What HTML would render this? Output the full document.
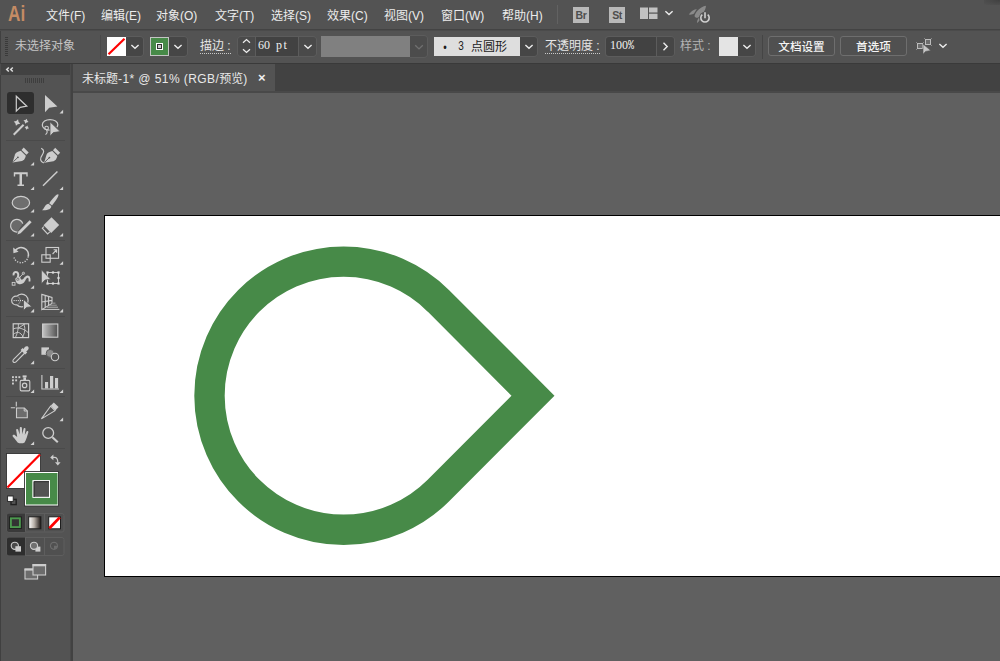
<!DOCTYPE html>
<html lang="zh-CN">
<head>
<meta charset="utf-8">
<title>未标题-1* @ 51% (RGB/预览)</title>
<style>
*{box-sizing:border-box;margin:0;padding:0}
html,body{width:1000px;height:661px;overflow:hidden;background:#606060}
body{position:relative;font-family:"Liberation Sans","Noto Sans CJK SC",sans-serif;font-size:12px;color:#e4e4e4}
.abs{position:absolute}
#menubar{left:0;top:0;width:1000px;height:29px;background:#535353}
#menuline{left:0;top:29px;width:1000px;height:2px;background:linear-gradient(#434343,#434343 50%,#4b4b4b 50%)}
#ctrlbar{left:0;top:31px;width:1000px;height:32px;background:#535353}
#ctrlline{left:0;top:63px;width:1000px;height:1px;background:#3a3a3a}
#tabbar{left:72px;top:64px;width:928px;height:27px;background:#424242}
#tabline{left:73px;top:91px;width:927px;height:2px;background:#494949}
#tab{left:73px;top:64px;width:202px;height:27px;background:#535353}
#panel{left:0;top:64px;width:70px;height:597px;background:#535353}
#panelhead{left:1px;top:64px;width:69px;height:11px;background:#424242}
#paneledge{left:70px;top:64px;width:3px;height:597px;background:linear-gradient(to right,#4a4a4a 0,#4a4a4a 1px,#424242 1px)}
#canvas{left:73px;top:93px;width:927px;height:568px;background:#606060}
#artboard{left:104px;top:215px;width:900px;height:362px;background:#fff;border:1px solid #000}
.mi{top:7px;height:18px;line-height:18px;white-space:nowrap;font-size:12px;color:#ececec}
.ct{white-space:nowrap;font-size:12px;line-height:16px}

.box{position:absolute;top:37px;height:19px}
.dd{position:absolute;top:37px;height:19px;background:#464646;border-radius:0 3px 3px 0;box-shadow:1px 0 0 0 #5c5c5c,0 1px 0 0 #5c5c5c,0 -1px 0 0 #5c5c5c}
.dd svg,.chev{position:absolute}
.inp{position:absolute;top:37px;height:19px;background:#424242;color:#f0f0f0;white-space:nowrap;box-shadow:0 0 0 1px #5c5c5c}
.inp span,.ss{display:inline-block;font-family:"Liberation Mono","Noto Sans CJK SC",monospace;font-size:12px;line-height:16px;transform-origin:0 0;transform:scaleX(0.833);white-space:pre}
.lbl{position:absolute;top:39px;font-size:12px;line-height:15px;white-space:nowrap;color:#e6e6e6;border-bottom:1px dotted #c8c8c8;height:15px}
.btn{position:absolute;top:36px;height:20px;border:1px solid #6e6e6e;border-radius:3px;background:#505050;color:#f4f4f4;font-size:11.6px;line-height:20px;text-align:center;font-weight:500;white-space:nowrap}
.sf{position:absolute;font-weight:normal;font-family:"Liberation Serif",serif;font-size:12px;line-height:16px;white-space:pre}
</style>
</head>
<body>
<div id="menubar" class="abs"></div>
<div id="menuline" class="abs"></div>
<div id="ctrlbar" class="abs"></div>
<div id="ctrlline" class="abs"></div>
<div id="canvas" class="abs"></div>
<div id="tabbar" class="abs"></div>
<div id="tab" class="abs"></div>
<div id="tabline" class="abs"></div>
<div id="panel" class="abs"></div>
<div id="panelhead" class="abs"></div>
<div id="paneledge" class="abs"></div>
<div id="artboard" class="abs"></div>

<!-- artwork -->
<svg class="abs" style="left:0;top:0" width="1000" height="661" viewBox="0 0 1000 661">
  <path d="M438.42 300.88 A134.1 134.1 0 1 0 438.42 490.52 L533 395.7 Z" fill="none" stroke="#478a48" stroke-width="30.4" stroke-linejoin="miter" stroke-miterlimit="10"/>
</svg>

<!-- PANEL-START -->
<svg class="abs" style="left:0;top:0" width="72" height="661" viewBox="0 0 72 661">
<path d="M8.8 67.5 L6.7 69.5 L8.8 71.5 M12.8 67.5 L10.7 69.5 L12.8 71.5" fill="none" stroke="#dcdcdc" stroke-width="1.5"/>
<g stroke="#3e3e3e" stroke-width="1"><line x1="25.5" y1="78" x2="25.5" y2="83"/><line x1="27.5" y1="78" x2="27.5" y2="83"/><line x1="29.5" y1="78" x2="29.5" y2="83"/><line x1="31.5" y1="78" x2="31.5" y2="83"/><line x1="33.5" y1="78" x2="33.5" y2="83"/><line x1="35.5" y1="78" x2="35.5" y2="83"/><line x1="37.5" y1="78" x2="37.5" y2="83"/><line x1="39.5" y1="78" x2="39.5" y2="83"/><line x1="41.5" y1="78" x2="41.5" y2="83"/><line x1="43.5" y1="78" x2="43.5" y2="83"/></g>
<line x1="6" y1="140.5" x2="65" y2="140.5" stroke="#4a4a4a" stroke-width="1"/>
<line x1="6" y1="240.5" x2="65" y2="240.5" stroke="#4a4a4a" stroke-width="1"/>
<line x1="6" y1="316.5" x2="65" y2="316.5" stroke="#4a4a4a" stroke-width="1"/>
<line x1="6" y1="368.5" x2="65" y2="368.5" stroke="#4a4a4a" stroke-width="1"/>
<line x1="6" y1="396.5" x2="65" y2="396.5" stroke="#4a4a4a" stroke-width="1"/>
<line x1="6" y1="448.5" x2="65" y2="448.5" stroke="#4a4a4a" stroke-width="1"/>
<rect x="7" y="92" width="27" height="22" rx="3" fill="#2e2e2e"/>
<path d="M16.3 96.2 L16.3 111.2 L20.2 107.4 L26.8 106.2 Z" fill="none" stroke="#cdcdcd" stroke-width="1.2"/>
<path d="M45 95 L45 112.2 L49.2 107.8 L57.4 106.4 Z" fill="#cdcdcd"/>
<path d="M59.5 113.39999999999999 L63.1 113.39999999999999 L63.1 109.8 Z" fill="#d2d2d2"/>
<line x1="13.7" y1="134.8" x2="23.6" y2="124.8" stroke="#cdcdcd" stroke-width="2"/>
<path transform="rotate(18 17 122.6)" d="M17 119.19999999999999 L18.224 121.37599999999999 L20.4 122.6 L18.224 123.824 L17 126.0 L15.776 123.824 L13.6 122.6 L15.776 121.37599999999999 Z" fill="#cdcdcd"/>
<path transform="rotate(18 26 121.2)" d="M26 118.5 L26.972 120.22800000000001 L28.7 121.2 L26.972 122.172 L26 123.9 L25.028 122.172 L23.3 121.2 L25.028 120.22800000000001 Z" fill="#cdcdcd"/>
<path transform="rotate(18 26.8 127.6)" d="M26.8 125.3 L27.628 126.77199999999999 L29.1 127.6 L27.628 128.428 L26.8 129.9 L25.972 128.428 L24.5 127.6 L25.972 126.77199999999999 Z" fill="#cdcdcd"/>
<path d="M50 130.2 C45.5 130.2 42.3 127.8 42.3 125 C42.3 121.8 45.8 119.6 50 119.6 C54.4 119.6 57.8 121.8 57.8 124.6 C57.8 125.6 57.5 126.4 57 127" fill="none" stroke="#cdcdcd" stroke-width="1.2"/>
<circle cx="46.6" cy="128" r="1.8" fill="none" stroke="#cdcdcd" stroke-width="1.1"/><path d="M46.6 129.8 C47.4 131.6 47.2 133.6 45.4 134.6" fill="none" stroke="#cdcdcd" stroke-width="1.1"/>
<path d="M50 121.8 L50 136.2 L53.4 132.6 L60.2 131.6 Z" fill="#cdcdcd" stroke="#535353" stroke-width="0.8"/>
<g transform="translate(0 0)"><path d="M12.6 162.5 L15 154.4 C15.6 152.8 17.6 151.4 20.8 150.7 L25.8 155.7 C25.2 158.6 23.8 160.4 22 160.9 Z" fill="#cdcdcd"/><path d="M21.5 149.9 L23.7 147.4 L28.7 152.4 L26.4 154.8 Z" fill="#cdcdcd"/><line x1="13.3" y1="161.8" x2="17.6" y2="157.6" stroke="#535353" stroke-width="0.9"/><circle cx="17.9" cy="157.3" r="0.9" fill="#535353"/></g>
<path d="M30.5 165.6 L34.1 165.6 L34.1 162 Z" fill="#d2d2d2"/>
<g transform="translate(31.5 0.3)"><path d="M12.6 162.5 L15 154.4 C15.6 152.8 17.6 151.4 20.8 150.7 L25.8 155.7 C25.2 158.6 23.8 160.4 22 160.9 Z" fill="#cdcdcd"/><path d="M21.5 149.9 L23.7 147.4 L28.7 152.4 L26.4 154.8 Z" fill="#cdcdcd"/><line x1="13.3" y1="161.8" x2="17.6" y2="157.6" stroke="#535353" stroke-width="0.9"/><circle cx="17.9" cy="157.3" r="0.9" fill="#535353"/></g>
<path d="M41.2 148.2 C44.6 149.8 44 152.6 42 155.4 C39.8 158.4 40 161.6 43.8 162.9" fill="none" stroke="#cdcdcd" stroke-width="1.2"/>
<path d="M13.8 172.3 H27.7 V176.6 H26.3 V174.3 H22 V184.4 H24 V185.9 H17.5 V184.4 H19.5 V174.3 H15.2 V176.6 H13.8 Z" fill="#cdcdcd"/>
<path d="M30.5 190.1 L34.1 190.1 L34.1 186.5 Z" fill="#d2d2d2"/>
<line x1="43" y1="185.8" x2="57.4" y2="171.5" stroke="#cdcdcd" stroke-width="1.5"/>
<path d="M59.5 190.1 L63.1 190.1 L63.1 186.5 Z" fill="#d2d2d2"/>
<ellipse cx="20.9" cy="202.7" rx="8.7" ry="6.4" fill="#6e6e6e" stroke="#cdcdcd" stroke-width="1.2"/>
<path d="M30.5 212.6 L34.1 212.6 L34.1 209 Z" fill="#d2d2d2"/>
<path d="M58.3 194.2 C59 195.6 57.4 198.6 52 205.4 L49.2 203.2 C54 196.4 56.8 193.8 58.3 194.2 Z" fill="#cdcdcd"/>
<path d="M48.4 203.8 L51.2 206 C51.6 209 47.6 210.6 42 210.2 C44.6 208.8 44 205 48.4 203.8 Z" fill="#cdcdcd"/>
<path d="M59.5 212.6 L63.1 212.6 L63.1 209 Z" fill="#d2d2d2"/>
<path d="M17.5 232 A6.3 6.3 0 1 1 22.8 223.6" fill="#6a6a6a" stroke="#cdcdcd" stroke-width="1.2"/>
<path d="M29.6 220.3 L31.6 222.3 L20.6 233.3 L17.4 234.6 L18.6 231.3 Z" fill="#cdcdcd"/>
<path d="M30.5 236.6 L34.1 236.6 L34.1 233 Z" fill="#d2d2d2"/>
<path d="M51.5 217.3 L59.2 225 L51.2 233 L43.5 225.3 Z" fill="#cdcdcd"/>
<path d="M43.9 226.6 L42.3 228.2 L47.6 233.9 L49.8 231.9" fill="none" stroke="#cdcdcd" stroke-width="1.1"/>
<path d="M59.5 236.6 L63.1 236.6 L63.1 233 Z" fill="#d2d2d2"/>
<path d="M15.2 250.5 A7.3 7.3 0 0 1 28.2 256.5" fill="none" stroke="#cdcdcd" stroke-width="1.6"/>
<path d="M28.2 256.5 A7.3 7.3 0 0 1 14 257.5" fill="none" stroke="#cdcdcd" stroke-width="1.4" stroke-dasharray="1.2 1.4"/>
<path d="M13.2 247.6 L13.4 253.2 L18.6 251.8 Z" fill="#cdcdcd"/>
<path d="M30.5 264.8 L34.1 264.8 L34.1 261.2 Z" fill="#d2d2d2"/>
<rect x="46" y="247.5" width="12.6" height="10.8" fill="none" stroke="#cdcdcd" stroke-width="1.1"/>
<rect x="41.8" y="254.8" width="8.4" height="7.4" fill="none" stroke="#cdcdcd" stroke-width="1.1"/>
<path d="M52.6 254 L56 250.4 M53.6 249.8 H56.6 V252.8" fill="none" stroke="#cdcdcd" stroke-width="1.1"/>
<path d="M59.5 264.8 L63.1 264.8 L63.1 261.2 Z" fill="#d2d2d2"/>
<path d="M13.6 275.4 C13 272.6 15.4 271.2 17.2 272.4 C19.2 273.8 18.2 276.4 17.4 278.4" fill="none" stroke="#cdcdcd" stroke-width="2"/>
<path d="M15.4 278.2 C15 283.2 19 285.4 22.6 283.6 C25.4 282.2 25.6 278.6 27.4 277.8 C28.6 277.4 28.8 279.4 28.6 281.4 L30.4 281.4 C30.8 278.4 30.2 275.4 27.6 275.4 C24.6 275.6 24.2 278.8 22.2 279.6 C20.6 280 20.4 278 20 276.6 Z" fill="#cdcdcd"/>
<path d="M18.6 278.6 L23 273.8" stroke="#cdcdcd" stroke-width="0.9"/><circle cx="23.4" cy="273.3" r="1.2" fill="#8a8a8a" stroke="#cdcdcd" stroke-width="0.7"/><circle cx="17.9" cy="279.3" r="1.7" fill="#444" stroke="#cdcdcd" stroke-width="0.8"/><circle cx="17.9" cy="279.3" r="0.7" fill="#eee"/>
<rect x="12.2" y="282.4" width="2.8" height="2.8" fill="#535353" stroke="#cdcdcd" stroke-width="0.9"/>
<path d="M30.5 288.8 L34.1 288.8 L34.1 285.2 Z" fill="#d2d2d2"/>
<rect x="47.5" y="272.5" width="11" height="11" fill="none" stroke="#cdcdcd" stroke-width="1"/>
<rect x="46.4" y="271.4" width="2.2" height="2.2" fill="#dadada"/>
<rect x="51.9" y="271.4" width="2.2" height="2.2" fill="#dadada"/>
<rect x="57.4" y="271.4" width="2.2" height="2.2" fill="#dadada"/>
<rect x="57.4" y="276.9" width="2.2" height="2.2" fill="#dadada"/>
<rect x="57.4" y="282.4" width="2.2" height="2.2" fill="#dadada"/>
<rect x="51.9" y="282.4" width="2.2" height="2.2" fill="#dadada"/>
<rect x="46.4" y="282.4" width="2.2" height="2.2" fill="#dadada"/>
<path d="M41.4 269.8 L41.4 283.8 L45 280 L50.6 279.2 Z" fill="#cdcdcd" stroke="#535353" stroke-width="0.7"/>
<path d="M16.92 296.25 A4.35 4.35 0 1 0 16.92 304.75 A6.4 6.4 0 1 0 16.92 296.25 Z" fill="none" stroke="#cdcdcd" stroke-width="1.2"/>
<path d="M16.92 296.25 A4.35 4.35 0 0 1 16.92 304.75" fill="none" stroke="#8c8c8c" stroke-width="1"/>
<line x1="13.6" y1="300.6" x2="23.6" y2="300.6" stroke="#e0e0e0" stroke-width="1" stroke-dasharray="1.1 1"/>
<path d="M23.5 299.4 L23.5 310.6 L26.6 307.4 L32 306.7 Z" fill="#cdcdcd" stroke="#535353" stroke-width="0.8"/>
<path d="M30.5 312.40000000000003 L34.1 312.40000000000003 L34.1 308.8 Z" fill="#d2d2d2"/>
<path d="M41.8 294.4 L52 297.4 V303.4 L41.8 309.6 Z M41.8 302 L52 300.4 M45.2 295.4 V307.6 M48.6 296.4 V305.4" fill="none" stroke="#cdcdcd" stroke-width="1.1"/>
<path d="M52 303.2 H55.4" stroke="#8c8c8c" stroke-width="1.4"/><path d="M50 305.2 H56.8" stroke="#a0a0a0" stroke-width="1"/><path d="M47 307.2 H58" stroke="#b4b4b4" stroke-width="1"/><path d="M42 309.4 H59.4" stroke="#cdcdcd" stroke-width="1"/>
<path d="M59.5 312.40000000000003 L63.1 312.40000000000003 L63.1 308.8 Z" fill="#d2d2d2"/>
<rect x="13.2" y="323.8" width="15.4" height="13.8" fill="none" stroke="#cdcdcd" stroke-width="1.2"/>
<path d="M13.2 329 C18 326.6 24 328.6 28.6 333 M13.2 334.4 C17 331.6 20 331 23.6 337.6 M18.4 323.8 C18.6 328 17.6 333 15.4 337.6 M23.6 323.8 C25.6 328 25.2 333 22 337.6 M18.6 328 L24.8 324" fill="none" stroke="#cdcdcd" stroke-width="0.9"/>
<defs><linearGradient id="gr1" x1="0" x2="1" y1="0" y2="0"><stop offset="0" stop-color="#c4c4c4"/><stop offset="1" stop-color="#505050"/></linearGradient><linearGradient id="gr2" x1="0" x2="1" y1="0" y2="0"><stop offset="0" stop-color="#ffffff"/><stop offset="0.45" stop-color="#b8b0a8"/><stop offset="1" stop-color="#1a1412"/></linearGradient></defs>
<rect x="42.6" y="324" width="15.2" height="13.2" fill="url(#gr1)" stroke="#cdcdcd" stroke-width="1.1"/>
<path d="M22.4 350.6 L13.6 359.4 C12.6 360.4 12.8 361.6 13.4 362 C14 362.6 15.2 362.6 16 361.8 L24.8 353" fill="none" stroke="#cdcdcd" stroke-width="1.1"/>
<path d="M20.6 350 L22.6 348 L23.6 349 C24.4 346.6 26.4 345.4 28 346.6 C29.4 348 28.6 350 26.2 351.4 L27.2 352.4 L25.2 354.4 Z" fill="#cdcdcd"/>
<path d="M30.5 364.20000000000005 L34.1 364.20000000000005 L34.1 360.6 Z" fill="#d2d2d2"/>
<rect x="41.4" y="347.4" width="7.6" height="7.4" fill="#cdcdcd"/>
<circle cx="50.2" cy="353.4" r="4" fill="#8a8a8a" stroke="#535353" stroke-width="0.9"/>
<circle cx="55" cy="357" r="3.7" fill="#535353" stroke="#cdcdcd" stroke-width="1.1"/>
<rect x="12" y="376.2" width="1.9" height="1.9" fill="#cdcdcd"/>
<rect x="15.2" y="376.2" width="1.9" height="1.9" fill="#cdcdcd"/>
<rect x="18.4" y="376.2" width="1.9" height="1.9" fill="#cdcdcd"/>
<rect x="12" y="379.4" width="1.9" height="1.9" fill="#cdcdcd"/>
<rect x="15.2" y="379.4" width="1.9" height="1.9" fill="#cdcdcd"/>
<rect x="12" y="382.6" width="1.9" height="1.9" fill="#cdcdcd"/>
<path d="M21.4 380.4 H28.6 C29.4 380.4 29.8 381 29.8 381.8 V389.6 C29.8 390.4 29.4 390.9 28.6 390.9 H21.4 C20.6 390.9 20.2 390.4 20.2 389.6 V381.8 C20.2 381 20.6 380.4 21.4 380.4 Z" fill="none" stroke="#cdcdcd" stroke-width="1.1"/>
<rect x="22.6" y="375.4" width="4" height="2" fill="#cdcdcd"/><rect x="23.4" y="377.4" width="2.6" height="3" fill="#cdcdcd"/>
<circle cx="24.6" cy="385.4" r="2.2" fill="none" stroke="#cdcdcd" stroke-width="1.2"/>
<path d="M30.5 393.0 L34.1 393.0 L34.1 389.4 Z" fill="#d2d2d2"/>
<path d="M41.9 375 V389 H59" fill="none" stroke="#cdcdcd" stroke-width="1.1"/>
<rect x="45" y="382" width="3.1" height="6.4" fill="#cdcdcd"/><rect x="50" y="376" width="3.2" height="12.4" fill="#cdcdcd"/><rect x="55" y="378" width="3.1" height="10.4" fill="#cdcdcd"/>
<path d="M59.5 393.0 L63.1 393.0 L63.1 389.4 Z" fill="#d2d2d2"/>
<path d="M16.3 401.8 V406.4 M10.8 407.8 H15.2" stroke="#cdcdcd" stroke-width="1.1"/>
<path d="M16.5 408 H24.4 L27.3 410.9 V417.8 H16.5 Z" fill="#6c6c6c" stroke="#cdcdcd" stroke-width="1.1"/><path d="M24.2 408 V411 H27.3" fill="none" stroke="#cdcdcd" stroke-width="1"/>
<path d="M41.4 418.9 L50.6 406 L55 410.6 Z" fill="none" stroke="#cdcdcd" stroke-width="1.1"/>
<path d="M50.8 405.6 L53.8 402.6 L58.6 407 L55.4 410.6 Z" fill="#cdcdcd"/>
<path d="M59.5 421.20000000000005 L63.1 421.20000000000005 L63.1 417.6 Z" fill="#d2d2d2"/>
<path d="M17.6 442.4 C15.4 439.4 13.8 437.6 12.6 436.2 C12.4 434.8 14 434.4 15 435.2 L17.2 437 L16.2 430.2 C16 428.8 17.8 428.4 18.2 429.8 L19.6 434.4 L19.8 428 C19.8 426.6 21.8 426.6 21.9 428 L22.3 434.2 L23.6 428.8 C23.9 427.6 25.7 427.9 25.5 429.3 L24.8 435 L26.6 431.6 C27.2 430.6 28.8 431.2 28.3 432.6 C27.2 435.8 26.6 439.6 24.6 442.4 C22.8 443.6 19.4 443.6 17.6 442.4 Z" fill="#cdcdcd"/>
<path d="M30.5 445.0 L34.1 445.0 L34.1 441.4 Z" fill="#d2d2d2"/>
<circle cx="48.2" cy="433" r="5.4" fill="none" stroke="#cdcdcd" stroke-width="1.3"/><line x1="52.4" y1="437.3" x2="57.8" y2="442.3" stroke="#cdcdcd" stroke-width="2.1"/>
<rect x="6.5" y="453.5" width="34" height="35" fill="#fff" stroke="#333" stroke-width="0.9"/>
<line x1="7.4" y1="487.6" x2="40" y2="454.4" stroke="#f00" stroke-width="2.2"/>
<path d="M51.6 457.4 H54.4 C57 457.4 57.8 459 57.8 462.4" fill="none" stroke="#cdcdcd" stroke-width="1.2"/><path d="M50.2 457.4 L53.4 454.6 V460.2 Z M57.8 465.6 L55 462.2 H60.6 Z" fill="#cdcdcd"/>
<rect x="24.5" y="471.5" width="34" height="34.5" fill="#fff" stroke="#333" stroke-width="0.9"/>
<path d="M26 473 H57.5 V504.6 H26 Z M32.6 480.2 V497.8 H50 V480.2 Z" fill="#478a48" fill-rule="evenodd"/>
<rect x="33.1" y="480.7" width="16.4" height="16.6" fill="#535353" stroke="#fff" stroke-width="1"/><path d="M34.1 497 V481.7 H49" fill="none" stroke="#2c2c2c" stroke-width="1"/>
<rect x="11" y="499.4" width="5.2" height="5.2" fill="#535353" stroke="#222" stroke-width="1.4"/><rect x="7.6" y="496" width="5.6" height="5.4" fill="#fff" stroke="#222" stroke-width="0.9"/>
<rect x="7" y="513.5" width="57" height="18.5" rx="2" fill="#505050" stroke="#5e5e5e" stroke-width="1"/>
<path d="M9 513.5 H25 V532 H9 C7.8 532 7 531.2 7 530 V515.5 C7 514.3 7.8 513.5 9 513.5 Z" fill="#3a3a3a"/>
<line x1="25.5" y1="514" x2="25.5" y2="531.5" stroke="#5e5e5e"/><line x1="44.5" y1="514" x2="44.5" y2="531.5" stroke="#5e5e5e"/>
<rect x="9" y="516.4" width="12.8" height="12.6" fill="#1e1e1e"/><rect x="10.9" y="518.3" width="9" height="8.8" fill="#333" stroke="#4c994e" stroke-width="1.9"/>
<rect x="28.7" y="516.8" width="12.2" height="12" fill="url(#gr2)" stroke="#1e1e1e" stroke-width="1"/>
<rect x="48.7" y="516.8" width="11.8" height="12" fill="#fff" stroke="#1e1e1e" stroke-width="1"/><path d="M49.4 528.2 L59.8 517.4" stroke="#f00" stroke-width="2.8"/>
<rect x="7" y="537.5" width="57" height="18" rx="2" fill="#505050" stroke="#5e5e5e" stroke-width="1"/>
<path d="M9 537.5 H25 V555.5 H9 C7.8 555.5 7 554.7 7 553.5 V539.5 C7 538.3 7.8 537.5 9 537.5 Z" fill="#2e2e2e"/>
<line x1="25.5" y1="538" x2="25.5" y2="555" stroke="#5e5e5e"/><line x1="44.5" y1="538" x2="44.5" y2="555" stroke="#5e5e5e"/>
<circle cx="14.8" cy="545.8" r="3.6" fill="#4a4a4a" stroke="#cdcdcd" stroke-width="1.1"/><rect x="15.4" y="546.2" width="5.6" height="5.4" fill="#cdcdcd"/>
<rect x="35.4" y="546.6" width="5" height="5" fill="#cdcdcd"/><circle cx="34" cy="545.8" r="3.6" fill="#707070" stroke="#cdcdcd" stroke-width="1.1"/>
<circle cx="54" cy="545.8" r="3.6" fill="none" stroke="#727272" stroke-width="1"/><path d="M54 545.8 H57.4 A3.4 3.4 0 0 1 54 549.2 Z" fill="#6c6c6c"/>
<rect x="25" y="569" width="12.6" height="10" fill="#6c6c6c" stroke="#cdcdcd" stroke-width="1.1"/><line x1="24.5" y1="569.6" x2="38.1" y2="569.6" stroke="#cdcdcd" stroke-width="2"/>
<rect x="33" y="564.6" width="12.6" height="10.4" fill="#6c6c6c" stroke="#cdcdcd" stroke-width="1.1"/><line x1="32.5" y1="565.2" x2="46.1" y2="565.2" stroke="#cdcdcd" stroke-width="2.2"/>
</svg>
<!-- PANEL-END -->

<!-- menu -->
<div class="abs" style="left:8px;top:1px;font-size:21.5px;line-height:26px;color:#c48b64;font-weight:bold;letter-spacing:0px;transform-origin:0 0;transform:scaleX(0.8)">Ai</div>
<div class="abs mi" style="left:46px">文件(F)</div>
<div class="abs mi" style="left:101px">编辑(E)</div>
<div class="abs mi" style="left:156px">对象(O)</div>
<div class="abs mi" style="left:215px">文字(T)</div>
<div class="abs mi" style="left:271px">选择(S)</div>
<div class="abs mi" style="left:327px">效果(C)</div>
<div class="abs mi" style="left:384px">视图(V)</div>
<div class="abs mi" style="left:441px">窗口(W)</div>
<div class="abs mi" style="left:502px">帮助(H)</div>


<div class="abs" style="left:984px;top:0;width:16px;height:5px;background:radial-gradient(ellipse at 100% 0,#404040 0,#484848 40%,rgba(83,83,83,0) 100%)"></div>
<!-- menubar right icons -->
<div class="abs" style="left:557px;top:5px;width:1px;height:19px;background:#626262"></div>
<div class="abs" style="left:573px;top:7px;width:16px;height:16px;background:#b9b9b9;color:#4e4e4e;font-weight:bold;font-size:10.5px;line-height:16px;text-align:center;letter-spacing:-0.4px">Br</div>
<div class="abs" style="left:609px;top:7px;width:16px;height:16px;background:#b9b9b9;color:#4e4e4e;font-weight:bold;font-size:10.5px;line-height:16px;text-align:center;letter-spacing:-0.4px">St</div>
<svg class="abs" style="left:640px;top:7px" width="18" height="13" viewBox="0 0 18 13"><rect x="0" y="0.5" width="8" height="11.5" fill="#c2c2c2"/><rect x="9" y="0.5" width="8.5" height="5" fill="#c2c2c2"/><rect x="9" y="6.7" width="8.5" height="5.3" fill="#c2c2c2"/></svg>
<svg class="abs" style="left:664px;top:10px" width="10" height="7" viewBox="0 0 10 7"><path d="M1.4 1.2 L5 4.6 L8.6 1.2" fill="none" stroke="#ececec" stroke-width="1.4"/></svg>
<svg class="abs" style="left:688px;top:4px" width="24" height="21" viewBox="0 0 24 21"><path d="M18 1.8 C12 3 7.5 8 6.5 12 C7 13.6 8.5 14.2 10.2 13.6 C14.5 11 17.5 6.5 18 1.8 Z" fill="#8a8a8a"/><path d="M8.8 5 C5 5.8 2.5 8 0.8 10.6 C3 11 5 10.3 6 9.6 Z" fill="#8a8a8a"/><path d="M11.2 13.2 C9.6 15 9 17 9 19 C10.5 18 11.6 16.6 12 15 Z" fill="#8a8a8a"/><circle cx="17" cy="13.6" r="5.9" fill="#535353"/><path d="M14.3 10.6 A4.2 4.2 0 1 0 19.7 10.6" fill="none" stroke="#d0d0d0" stroke-width="1.6"/><line x1="17" y1="8.2" x2="17" y2="14.3" stroke="#d0d0d0" stroke-width="1.6"/></svg>
<!-- tab -->
<div class="abs ct" style="left:82px;top:71px;color:#e8e8e8">未标题<span style="letter-spacing:0.42px">-1* @ 51% (RGB/</span>预览)</div>
<div class="abs ct" style="left:258px;top:70px;color:#f0f0f0;font-weight:bold;font-size:13px">×</div>

<!-- control bar -->
<div class="abs ct" style="left:15px;top:38px;color:#c4c4c4">未选择对象</div>


<div class="abs" style="left:0;top:31px;width:1px;height:630px;background:#404040"></div><div class="abs" style="left:0;top:64px;width:1px;height:11px;background:#4c4c4c"></div>
<div class="abs" style="left:5px;top:37px;width:3px;height:19px;background:repeating-linear-gradient(to bottom,#3a3a3a 0,#3a3a3a 1px,transparent 1px,transparent 2px)"></div>
<div class="abs" style="left:100px;top:35px;width:1px;height:24px;background:#4a4a4a"></div>
<!-- fill swatch -->
<div class="box" style="left:107px;width:19px;background:#fff"><svg class="abs" style="left:0;top:0" width="19" height="19" viewBox="0 0 19 19"><line x1="1.5" y1="17.2" x2="17.5" y2="1.8" stroke="#f00" stroke-width="2.2"/></svg></div>
<div class="dd" style="left:126px;width:17px"><svg style="left:4px;top:7px" width="10" height="7" viewBox="0 0 10 7"><path d="M1.4 1 L5 4.3 L8.6 1" fill="none" stroke="#ececec" stroke-width="1.4"/></svg></div>
<!-- stroke swatch -->
<div class="box" style="left:150px;width:19px;background:#478a48;border:1px solid #c4c4c4"><div class="abs" style="left:5px;top:5px;width:7px;height:7px;border:1px solid #fff;background:#333"><div class="abs" style="left:1px;top:1px;width:3px;height:3px;background:#c8c8c8"></div></div></div>
<div class="dd" style="left:169px;width:18px"><svg style="left:4px;top:7px" width="10" height="7" viewBox="0 0 10 7"><path d="M1.4 1 L5 4.3 L8.6 1" fill="none" stroke="#ececec" stroke-width="1.4"/></svg></div>
<div class="lbl" style="left:200px">描边 :</div>
<!-- spinner -->
<div class="box" style="left:238px;width:18px;background:#4a4a4a;border-radius:3px 0 0 3px;box-shadow:-1px 0 0 0 #5c5c5c,0 1px 0 0 #5c5c5c,0 -1px 0 0 #5c5c5c"><svg class="abs" style="left:3px;top:0px" width="11" height="19" viewBox="0 0 11 19"><path d="M2 5.8 L5.5 2.6 L9 5.8 M2 12.2 L5.5 15.4 L9 12.2" fill="none" stroke="#ececec" stroke-width="1.3"/></svg></div>
<div class="inp" style="left:256px;width:42px"><b class="sf" style="left:2px;top:0px;word-spacing:3px">60 p<i style="font-style:normal;margin-left:1.5px">t</i></b></div>
<div class="dd" style="left:299px;width:17px;background:#4a4a4a"><svg style="left:4px;top:7px" width="10" height="7" viewBox="0 0 10 7"><path d="M1.4 1 L5 4.3 L8.6 1" fill="none" stroke="#ececec" stroke-width="1.4"/></svg></div>
<!-- var width profile -->
<div class="box" style="left:321px;top:36px;width:89px;height:21px;background:#808080"></div>
<div class="dd" style="left:410px;top:36px;height:21px;width:17px;background:#4c4c4c"><svg style="left:4px;top:8px" width="10" height="7" viewBox="0 0 10 7"><path d="M1.2 1.3 L5 4.9 L8.8 1.3" fill="none" stroke="#707070" stroke-width="1.4"/></svg></div>
<!-- brush -->
<div class="box" style="left:434px;width:86px;background:#dedede;color:#1c1c1c"><span class="ss" style="position:absolute;left:8px;top:4px">•</span><span class="ss" style="position:absolute;left:24px;top:2px">3</span><span class="abs" style="left:37px;top:2px;font-size:12px;line-height:16px;white-space:nowrap">点圆形</span></div>
<div class="dd" style="left:520px;width:17px"><svg style="left:4px;top:7px" width="10" height="7" viewBox="0 0 10 7"><path d="M1.4 1 L5 4.3 L8.6 1" fill="none" stroke="#ececec" stroke-width="1.4"/></svg></div>
<div class="lbl" style="left:545px">不透明度 :</div>
<div class="inp" style="left:606px;width:50px;border-radius:3px 0 0 3px"><b class="sf" style="left:4px;top:0px">100</b><span style="position:absolute;left:22px;top:1px">%</span></div>
<div class="dd" style="left:657px;width:17px"><svg style="left:5px;top:4px" width="8" height="12" viewBox="0 0 8 12"><path d="M1.5 1.8 L5.2 5.5 L1.5 9.2" fill="none" stroke="#ececec" stroke-width="1.4"/></svg></div>
<div class="abs ct" style="left:680px;top:38px;color:#b4b4b4">样式 :</div>
<div class="box" style="left:719px;width:19px;background:#e4e4e4"></div>
<div class="dd" style="left:738px;width:17px"><svg style="left:4px;top:7px" width="10" height="7" viewBox="0 0 10 7"><path d="M1.4 1 L5 4.3 L8.6 1" fill="none" stroke="#ececec" stroke-width="1.4"/></svg></div>
<div class="abs" style="left:762px;top:35px;width:1px;height:24px;background:#454545"></div>
<div class="btn" style="left:768px;width:67px">文档设置</div>
<div class="btn" style="left:840px;width:67px">首选项</div>
<svg class="abs" style="left:914px;top:36px" width="20" height="20" viewBox="0 0 20 20"><g fill="#6c6c6c" stroke="#bcbcbc" stroke-width="1"><rect x="3.5" y="7.5" width="5" height="5"/><rect x="11.5" y="3.5" width="5" height="5"/></g><g stroke="#bcbcbc" stroke-width="1"><path d="M2.5 6.5 l1 1 M9.5 6.5 l-1 1 M2.5 13.5 l1 -1 M10.5 2.5 l1 1 M17.5 2.5 l-1 1 M17.5 9.5 l-1 -1"/></g><path d="M9 8 L9 18.3 L11.6 15.4 L16.8 14.6 Z" fill="#c6c6c6" stroke="#535353" stroke-width="0.6"/></svg>
<svg class="abs" style="left:938px;top:43px" width="10" height="7" viewBox="0 0 10 7"><path d="M1.4 1 L5 4.3 L8.6 1" fill="none" stroke="#ececec" stroke-width="1.4"/></svg>
</body>
</html>
